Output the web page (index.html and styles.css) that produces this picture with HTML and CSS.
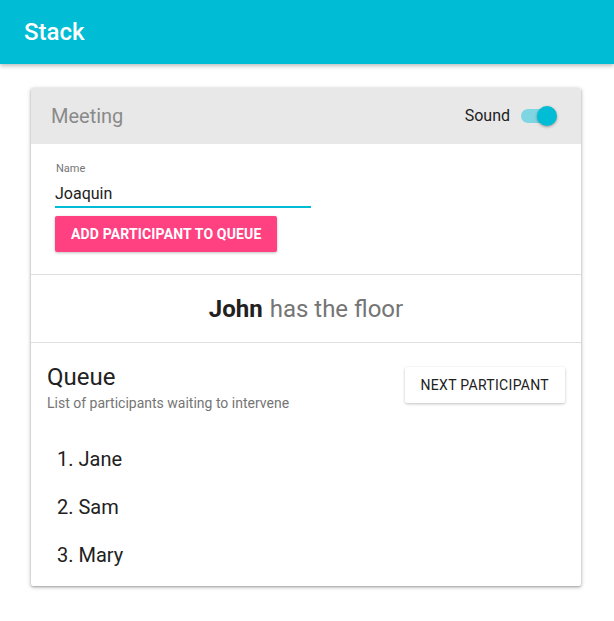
FILE: index.html
```html
<!DOCTYPE html>
<html>
<head>
<meta charset="utf-8">
<link rel="stylesheet" href="styles.css">
</head>
<body>
<header class="appbar"><span class="appbar-title">Stack</span></header>
<main class="card">
  <div class="card-head">
    <span class="card-title">Meeting</span>
    <div class="sound">
      <span class="sound-label">Sound</span>
      <span class="toggle"><span class="toggle-track"></span><span class="toggle-knob"></span></span>
    </div>
  </div>
  <section class="add">
    <div class="field">
      <label class="field-label">Name</label>
      <div class="field-input">Joaquin</div>
    </div>
    <button class="btn-pink">ADD PARTICIPANT TO QUEUE</button>
  </section>
  <section class="floor"><b>John</b> has the floor</section>
  <section class="queue">
    <div class="queue-head">
      <div>
        <div class="queue-title">Queue</div>
        <div class="queue-sub">List of participants waiting to intervene</div>
      </div>
      <button class="btn-white">NEXT PARTICIPANT</button>
    </div>
    <ol class="queue-list">
      <li>1. Jane</li>
      <li>2. Sam</li>
      <li>3. Mary</li>
    </ol>
  </section>
</main>
</body>
</html>
```
FILE: styles.css
```css
* { box-sizing: border-box; }
body {
  margin: 0;
  font-family: Roboto, "Liberation Sans", sans-serif;
  background: #fff;
  color: #212121;
}
.appbar {
  height: 64px;
  background: #00BCD4;
  display: flex;
  align-items: center;
  padding: 0 24px;
  box-shadow: 0 2px 4px rgba(0,0,0,0.25);
  position: relative;
}
.appbar-title {
  color: #fff;
  font-size: 24px;
  font-weight: 500;
}
.card {
  width: 550px;
  margin: 24px 0 32px 31px;
  border-radius: 2px;
  box-shadow: 0 1px 4px rgba(0,0,0,0.28), 0 1px 2px rgba(0,0,0,0.2);
  overflow: hidden;
}
.card-head {
  height: 56px;
  background: #e8e8e8;
  display: flex;
  align-items: center;
  justify-content: space-between;
  padding: 0 24px 0 20px;
}
.card-title {
  font-size: 20px;
  color: #8a8a8a;
}
.sound { display: flex; align-items: center; gap: 11px; }
.sound-label { font-size: 16px; color: #212121; margin-top: -2px; }
.toggle { position: relative; width: 36px; height: 20px; display: block; }
.toggle-track {
  position: absolute; left: 0; top: 3px; width: 34px; height: 14px;
  border-radius: 7px; background: #80D5E2;
}
.toggle-knob {
  position: absolute; right: 0; top: 0; width: 20px; height: 20px;
  border-radius: 50%; background: #00BCD4;
  box-shadow: 0 1px 3px rgba(0,0,0,0.35);
}
.add {
  padding: 18px 24px 22px 24px;
  border-bottom: 1px solid #e0e0e0;
}
.field { width: 256px; }
.field-label { display: block; font-size: 11px; color: #757575; margin-left: 1px; line-height: 13px; }
.field-input {
  font-size: 16px; line-height: 20px; padding: 9px 0 2px 0;
  border-bottom: 2px solid #00BCD4;
}
.btn-pink {
  display: block;
  margin-top: 8px;
  height: 36px;
  padding: 0 16px;
  border: none;
  border-radius: 2px;
  background: #FF4081;
  color: #fff;
  font-family: Roboto, "Liberation Sans", sans-serif;
  font-size: 14px;
  font-weight: 700;
  letter-spacing: 0.15px;
  box-shadow: 0 1px 3px rgba(0,0,0,0.25);
}
.floor {
  height: 68px;
  display: flex; align-items: center; justify-content: center;
  font-size: 24px;
  color: #757575;
  border-bottom: 1px solid #e0e0e0;
  gap: 7px;
}
.floor b { color: #212121; font-weight: 700; }
.queue { padding: 20px 16px 7px 16px; }
.queue-head { display: flex; justify-content: space-between; align-items: flex-start; }
.queue-title { font-size: 24px; line-height: 28px; }
.queue-sub { font-size: 14px; color: #757575; margin-top: 4px; }
.btn-white {
  margin-top: 4px;
  height: 36px;
  padding: 0 16px;
  border: none; border-radius: 2px;
  background: #fff;
  color: #212121;
  font-family: Roboto, "Liberation Sans", sans-serif;
  font-size: 14px;
  letter-spacing: 0.3px;
  box-shadow: 0 1px 3px rgba(0,0,0,0.25);
}
.queue-list { list-style: none; margin: 24px 0 0 0; padding: 0 10px; }
.queue-list li { font-size: 20px; height: 48px; display: flex; align-items: center; }
```
